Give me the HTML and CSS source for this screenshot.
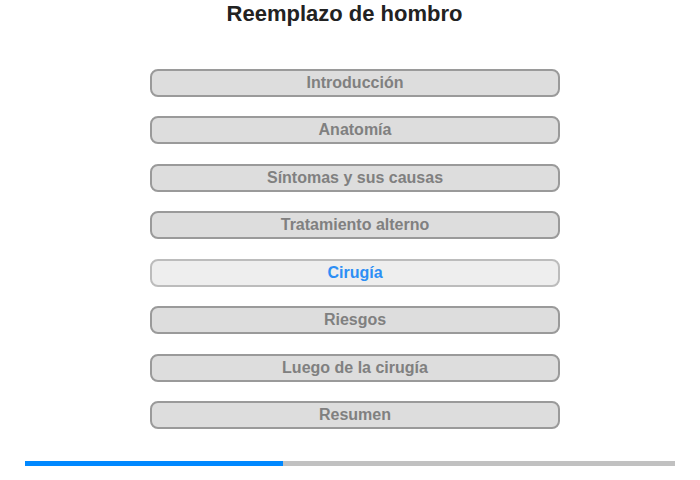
FILE: index.html
```html
<!DOCTYPE html>
<html lang="es">
<head>
  <meta charset="UTF-8">
  <title>Reemplazo de hombro</title>
  <link rel="stylesheet" href="styles.css">
</head>
<body>
  <div class="page">
    <h1>Reemplazo de hombro</h1>

    <div class="menu">
      <div class="item">Introducción</div>
      <div class="item">Anatomía</div>
      <div class="item">Síntomas y sus causas</div>
      <div class="item">Tratamiento alterno</div>
      <div class="item active">Cirugía</div>
      <div class="item">Riesgos</div>
      <div class="item">Luego de la cirugía</div>
      <div class="item">Resumen</div>
    </div>

    <div class="progress">
      <div class="progress-fill" style="width: 258px"></div>
    </div>
  </div>
</body>
</html>
```

FILE: styles.css
```css
body {
  margin: 0;
  padding: 0;
  background-color: #fff;
  font-family: "Liberation Sans", Arial, sans-serif;
}

.page {
  width: 700px;
  height: 480px;
}

h1 {
  margin: 0;
  padding-top: 1px;
  padding-right: 11px;
  text-align: center;
  font-size: 22px;
  line-height: 26px;
  color: #222;
}

.menu {
  display: flex;
  flex-direction: column;
  gap: 19.45px;
  width: 410px;
  margin: 42px 0 0 150px;
}

.item {
  box-sizing: border-box;
  height: 28px;
  line-height: 24px;
  border: 2px solid #9a9a9a;
  border-radius: 8px;
  background-color: #dddddd;
  color: #808080;
  font-size: 16px;
  font-weight: bold;
  text-align: center;
}

.item.active {
  border-color: #bcbcbc;
  background-color: #eeeeee;
  color: #2d8ef5;
}

.progress {
  width: 650px;
  height: 5px;
  margin: 32px 0 0 25px;
  background-color: #c1c1c1;
}

.progress-fill {
  height: 100%;
  background-color: #0088ff;
}
```
